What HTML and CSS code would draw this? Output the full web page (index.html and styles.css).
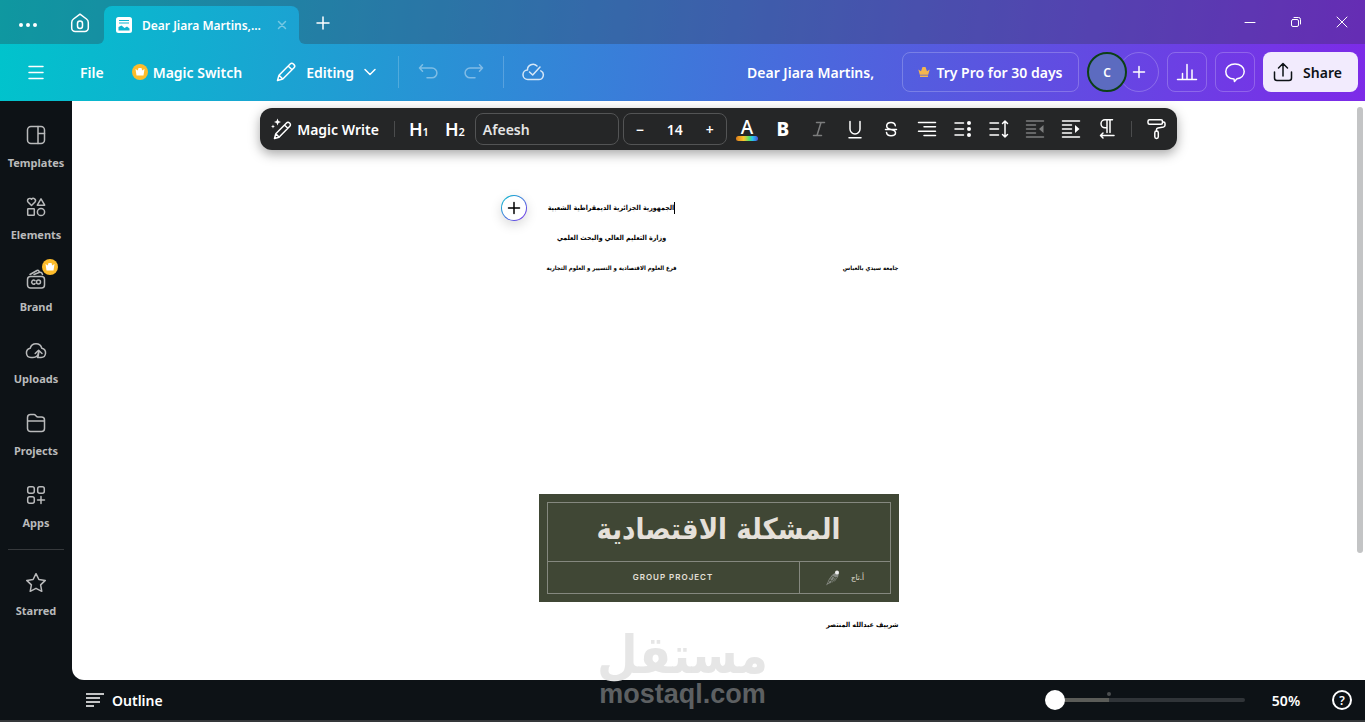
FILE: index.html
```html
<!DOCTYPE html>
<html lang="en">
<head>
  <meta charset="UTF-8" />
  <meta name="viewport" content="width=device-width, initial-scale=1.0"/>
  <title>Dear Jiara Martins,</title>
  <link rel="stylesheet" href="styles.css">
</head>
<body>

  <div class="top">
    <div class="title-bar">
      <button class="win-btn dots" aria-label="More">
        <svg width="20" height="20" viewBox="0 0 20 20" fill="currentColor"><circle cx="3" cy="10" r="2"/><circle cx="10" cy="10" r="2"/><circle cx="17" cy="10" r="2"/></svg>
      </button>
      <button class="win-btn home" aria-label="Home">
        <svg class="icon" width="24" height="24" viewBox="0 0 24 24"><path d="M12 3.2 18.5 8c1.2.9 1.8 2 1.8 3.400V17a3.500 3.500 0 0 1-3.500 3.500H7.200A3.500 3.500 0 0 1 3.700 17v-5.600c0-1.400.6-2.500 1.800-3.400Z"/><rect x="9.500" y="10" width="5" height="7.500" rx="2.500"/></svg>
      </button>
      <div class="tab">
        <svg width="16" height="16" viewBox="0 0 16 16"><rect width="16" height="16" rx="2.500" fill="#fff"/><path d="M3 3.500h10M3 6h10" stroke="#0fb5d0" stroke-width="1.200"/><path d="M2.500 13.500v-3.500l3-1.500 3 2.500 2.500-1.500 2.500 2v2Z" fill="#0fb5d0"/></svg>
        <span class="tab-name">Dear Jiara Martins,...</span>
        <button class="tab-close" aria-label="Close tab"><svg class="icon" width="10" height="10" viewBox="0 0 10 10"><path d="m1.500 1.500 7 7m0-7-7 7"/></svg></button>
      </div>
      <button class="win-btn add-tab" aria-label="New tab"><svg class="icon" width="16" height="16" viewBox="0 0 16 16"><path d="M8 2v12M2 8h12"/></svg></button>
      <div class="win-controls">
        <button class="win-btn" aria-label="Minimize"><svg class="icon thin" width="12" height="12" viewBox="0 0 12 12"><path d="M1 6.500h10"/></svg></button>
        <button class="win-btn" aria-label="Restore"><svg class="icon thin" width="12" height="12" viewBox="0 0 12 12"><rect x="1.500" y="3.500" width="7" height="7" rx="1.500"/><path d="M4 1.500h4.500a2 2 0 0 1 2 2V8"/></svg></button>
        <button class="win-btn" aria-label="Close"><svg class="icon thin" width="12" height="12" viewBox="0 0 12 12"><path d="m1 1 10 10M11 1 1 11"/></svg></button>
      </div>
    </div>

    <div class="header">
      <button class="menu" aria-label="Menu"><svg class="icon" width="24" height="24" viewBox="0 0 24 24"><path d="M5 6.500h14M5 12.500h14M5 18.500h14"/></svg></button>
      <button class="file">File</button>
      <button class="magic-switch">
        <svg width="16" height="16" viewBox="0 0 16 16"><circle cx="8" cy="8" r="8" fill="#fdbc2b"/><path d="m3.500 5 2.300 1.500L6.500 4h3l.7 2.500L12.500 5l-1 6.500h-7Z" fill="#fff"/></svg>
        Magic Switch
      </button>
      <button class="editing">
        <svg class="icon" width="24" height="24" viewBox="0 0 24 24"><path d="m3.500 20.500 1.500-5.300L16.200 4a2.300 2.300 0 0 1 3.200 0l.6.6a2.300 2.300 0 0 1 0 3.200L8.800 19ZM5 15.200 8.800 19M14.200 6 18 9.800"/></svg>
        Editing
        <svg class="icon" width="16" height="16" viewBox="0 0 16 16"><path d="m3 5.500 5 5 5-5"/></svg>
      </button>
      <span class="line"></span>
      <button class="history faded" aria-label="Undo"><svg class="icon" width="24" height="24" viewBox="0 0 24 24"><path d="M6.500 4.800 3.500 8l3 3.200M3.500 8H16a4.900 4.900 0 0 1 0 9.800h-5"/></svg></button>
      <button class="history faded" aria-label="Redo"><svg class="icon" width="24" height="24" viewBox="0 0 24 24"><path d="m17.500 4.800 3 3.200-3 3.200M20.500 8H8a4.900 4.900 0 0 0 0 9.800h5"/></svg></button>
      <span class="line"></span>
      <button class="history saved" aria-label="All changes saved"><svg class="icon" width="24" height="24" viewBox="0 0 24 24"><path d="M16 6a5.500 5.500 0 0 0-9.500 4 4.700 4.700 0 0 0 .5 9.500h10.500a4.600 4.600 0 0 0 2.300-8.700M8.500 12l3.200 3L19 7"/></svg></button>

      <div class="header-right">
        <input class="doc-name" type="text" value="Dear Jiara Martins," aria-label="Design title">
        <button class="outline-btn pro">
          <svg width="12" height="12" viewBox="0 0 12 12"><path d="m.3 3.500 2.700 1.700L4.500 1h3L9 5.200l2.700-1.700-1.500 5.200H1.800ZM2 9.500h8V11H2Z" fill="#f3b64f"/></svg>
          Try Pro for 30 days
        </button>
        <div class="people">
          <button class="avatar">C</button>
          <button class="add-person" aria-label="Add people"><svg class="icon" width="16" height="16" viewBox="0 0 16 16"><path d="M8 2.500v11M2.500 8h11"/></svg></button>
        </div>
        <button class="outline-btn square" aria-label="Insights"><svg class="icon" width="24" height="24" viewBox="0 0 24 24"><path d="M2.500 19.500h19M7.500 19v-5.500M12 19V4.500M17 19v-9"/></svg></button>
        <button class="outline-btn square" aria-label="Comments"><svg class="icon" width="24" height="24" viewBox="0 0 24 24"><path d="M12 4c5.200 0 9.200 3 9.200 7.500 0 4-3.200 6.700-7.200 7.300L11.500 21.500 11 19c-4.800-.3-8.200-3-8.200-7.500C2.800 7 6.800 4 12 4Z"/></svg></button>
        <button class="share">
          <svg class="icon" width="24" height="24" viewBox="0 0 24 24"><path d="M3.500 12v6A2.500 2.500 0 0 0 6 20.500h12a2.500 2.500 0 0 0 2.500-2.500v-6M12 16V3.500M7.500 8 12 3.500 16.500 8"/></svg>
          Share
        </button>
      </div>
    </div>
  </div>

  <div class="main">
    <nav class="sidebar">
      <a href="#"><svg class="icon" width="24" height="24" viewBox="0 0 24 24"><rect x="3.500" y="3.500" width="17" height="17" rx="3.500"/><path d="M14 3.500v17M14 10.500h6.500"/></svg>Templates</a>
      <a href="#"><svg class="icon" width="24" height="24" viewBox="0 0 24 24"><path d="M7.500 10.500 4 7a2 2 0 0 1 3.500-2.700A2 2 0 0 1 11 7ZM17 3.800l3.700 6.400h-7.400Z"/><rect x="3.700" y="13.700" width="6.600" height="6.600" rx=".5"/><circle cx="17" cy="17" r="3.600"/></svg>Elements</a>
      <a href="#">
        <svg class="icon" width="24" height="24" viewBox="0 0 24 24"><rect x="3.500" y="9.500" width="17" height="11.500" rx="3"/><path d="M6 7.500 13 3.500c1-.5 2 0 2 1M10 7.500l5-2c1.500-.6 3 0 3.500 2M11 13.600a2 2 0 1 0 0 3"/><circle cx="14.500" cy="15.100" r="2"/></svg>
        <svg class="crown" width="16" height="16" viewBox="0 0 16 16"><circle cx="8" cy="8" r="8" fill="#fdbc2b"/><path d="m3.500 5 2.300 1.500L6.500 4h3l.7 2.500L12.500 5l-1 6.500h-7Z" fill="#fff"/></svg>
        Brand
      </a>
      <a href="#"><svg class="icon" width="24" height="24" viewBox="0 0 24 24"><path d="M9 18.500H7a4.700 4.700 0 0 1-.8-9.300 6 6 0 0 1 11.600 0 4.700 4.700 0 0 1-.8 9.300h-3.500c1.200-1.500 1.200-3 1.200-6.500M11.200 14.500l3.400-3.300L18 14.500M9 18.500c3 0 5-2 5.500-5"/></svg>Uploads</a>
      <a href="#"><svg class="icon" width="24" height="24" viewBox="0 0 24 24"><path d="M3.500 10V6.500a3 3 0 0 1 3-3H10c1.800 0 2 2.500 4 2.500h3.500a3 3 0 0 1 3 3v8.500a3 3 0 0 1-3 3h-11a3 3 0 0 1-3-3V10h17"/></svg>Projects</a>
      <a href="#"><svg class="icon" width="24" height="24" viewBox="0 0 24 24"><rect x="3.700" y="3.700" width="6.600" height="6.600" rx="2"/><rect x="13.700" y="3.700" width="6.600" height="6.600" rx="2"/><rect x="3.700" y="13.700" width="6.600" height="6.600" rx="2"/><path d="M17 13.500v7M13.500 17h7"/></svg>Apps</a>
      <hr>
      <a href="#"><svg class="icon" width="24" height="24" viewBox="0 0 24 24"><path d="m12 2.700 2.900 5.800 6.400.9-4.700 4.500 1.200 6.400L12 17.300l-5.800 3 1.200-6.400L2.700 9.400l6.400-.9Z"/></svg>Starred</a>
    </nav>

    <div class="workspace">
      <div class="canvas">
        <div class="toolbar">
          <button class="magic-write">
            <svg class="icon" width="24" height="24" viewBox="0 0 24 24"><path d="m5.500 21.500 1.300-4.700L17.500 6a2.100 2.100 0 0 1 3 0l.3.300a2.100 2.100 0 0 1 0 3L10 20.200ZM6.800 16.800l3.400 3.400M15.500 8l3.300 3.300"/><path d="m8.500 1.500 1 2.500 2.500 1-2.500 1-1 2.500-1-2.500L5 5l2.500-1ZM4 7.500l.6 1.400L6 9.500l-1.400.6L4 11.500l-.6-1.400L2 9.500l1.400-.6Z" fill="currentColor" stroke="none"/></svg>
            Magic Write
          </button>
          <span class="divider"></span>
          <button class="tool heading">H<small>1</small></button>
          <button class="tool heading">H<small>2</small></button>
          <button class="font-name">Afeesh</button>
          <div class="font-size">
            <button aria-label="Decrease font size">−</button>
            <input type="text" value="14" aria-label="Font size">
            <button aria-label="Increase font size">+</button>
          </div>
          <button class="tool text-color" aria-label="Text color">A<span class="rainbow"></span></button>
          <button class="tool bold">B</button>
          <button class="tool faded" aria-label="Italic"><svg class="icon" width="24" height="24" viewBox="0 0 24 24"><path d="M9.500 5.500h8M6.500 18.500h8M14 5.500 10 18.500"/></svg></button>
          <button class="tool" aria-label="Underline"><svg class="icon" width="24" height="24" viewBox="0 0 24 24"><path d="M7 4.500V12a5 5 0 0 0 10 0V4.500M6 20.700h12"/></svg></button>
          <button class="tool" aria-label="Strikethrough"><svg class="icon" width="24" height="24" viewBox="0 0 24 24"><path d="M6.500 12.500h11M16.300 8.800c-.2-2-1.800-3.300-4.300-3.300S7.700 7 7.700 9c0 1.800 1.300 2.800 4.300 3.500 3 .7 4.500 1.500 4.500 3.200s-1.800 3-4.500 3-4.300-1.400-4.500-3.300"/></svg></button>
          <button class="tool" aria-label="Alignment"><svg class="icon" width="24" height="24" viewBox="0 0 24 24"><path d="M3.500 5.500h17M9 9.800h11.500M3.500 14.200h17M9 18.500h11.500"/></svg></button>
          <button class="tool" aria-label="List"><svg class="icon" width="24" height="24" viewBox="0 0 24 24"><path d="M4 6h8.500M4 12h8.500M4 18h8.500"/><g fill="currentColor" stroke="none"><circle cx="18" cy="6" r="2"/><circle cx="18" cy="12" r="2"/><circle cx="18" cy="18" r="2"/></g></svg></button>
          <button class="tool" aria-label="Spacing"><svg class="icon" width="24" height="24" viewBox="0 0 24 24"><path d="M3 6h8.500M3 12h8.500M3 18h8.500M18 4.500v15M15.500 6.500 18 4l2.500 2.500M15.500 17.500 18 20l2.500-2.500"/></svg></button>
          <button class="tool faded" aria-label="Outdent"><svg class="icon" width="24" height="24" viewBox="0 0 24 24"><path d="M3.500 4h17M3.500 8h9M3.500 12h9M3.500 16h9M3.500 20h17"/><path d="M20.500 8v8L16 12Z" fill="currentColor" stroke="none"/></svg></button>
          <button class="tool" aria-label="Indent"><svg class="icon" width="24" height="24" viewBox="0 0 24 24"><path d="M3.500 4h17M3.500 8h9M3.500 12h9M3.500 16h9M3.500 20h17"/><path d="M16 8v8l4.500-4Z" fill="currentColor" stroke="none"/></svg></button>
          <button class="tool" aria-label="Text direction"><svg class="icon" width="24" height="24" viewBox="0 0 24 24"><path d="M17.500 2.800H10a4 4 0 0 0 0 8h2M12 2.800v12.700M15 2.800v12.700M19 18.500H5.500M8 16l-2.500 2.500L8 21"/></svg></button>
          <span class="divider"></span>
          <button class="tool" aria-label="Copy style"><svg class="icon" width="24" height="24" viewBox="0 0 24 24"><rect x="4" y="2.700" width="14.500" height="4.500" rx="1.500"/><path d="M18.500 5h1a1.500 1.500 0 0 1 1.500 1.500v1.700c0 1-.6 1.500-1.500 1.700l-5.500 1c-1 .2-1.500.7-1.500 1.600V14"/><rect x="10.800" y="14" width="3.500" height="7.500" rx="1.700"/></svg></button>
        </div>

        <div class="page">
          <button class="add-block" aria-label="Add"><svg class="icon" width="16" height="16" viewBox="0 0 16 16"><path d="M8 2.500v11M2.500 8h11"/></svg></button>
          <div class="page-head" lang="ar">
            <p class="caret">الجمهورية الجزائرية الديمقراطية الشعبية</p>
            <p>وزارة التعليم العالي والبحث العلمي</p>
            <p class="small">فرع العلوم الاقتصادية و التسيير و العلوم التجارية</p>
            <p class="small university">جامعة سيدي بالعباس</p>
          </div>
          <div class="card">
            <div class="card-frame">
              <h1 lang="ar">المشكلة الاقتصادية</h1>
              <div class="card-row">
                <div class="group">GROUP PROJECT</div>
                <div class="teacher">
                  <svg width="16" height="16" viewBox="0 0 16 16"><path d="m1 15.500 3-6.500 3-4 4-3 3 1-1 4-3 4-4 2-2 .5Z" fill="#858982"/><path d="m3 13 4-6m-1 6 4-6m-2 5 4-5M7 6l4 2M4 10l3 1" stroke="#404735" stroke-width=".8"/><circle cx="12" cy="2.500" r="2" fill="#eee"/></svg>
                  <span lang="ar">أ.تاج</span>
                </div>
              </div>
            </div>
          </div>
          <p class="author" lang="ar">شرييف عبدالله المنتصر</p>
        </div>
        <div class="scrollbar"></div>
      </div>

      <div class="footer">
        <button class="outline"><svg width="20" height="16" viewBox="0 0 20 16"><path d="M1 2h18M1 6h14M1 10h14M1 14h8" stroke="currentColor" stroke-width="1.500"/></svg>Outline</button>
        <div class="zoom">
          <input type="range" min="50" max="500" value="50" aria-label="Zoom">
          <span class="zoom-mark"></span>
        </div>
        <button class="percent">50%</button>
        <button class="help" aria-label="Help">?</button>
      </div>
    </div>
  </div>

  <div class="watermark">
    <span lang="ar">مستقل</span>
    <span class="site">mostaql.com</span>
  </div>

</body>
</html>
```
FILE: styles.css
```css
* {
  box-sizing: border-box;
}

body {
  margin: 0;
  height: 100vh;
  display: flex;
  flex-direction: column;
  overflow: hidden;
  font-family: "Noto Sans", "Open Sans", sans-serif;
  font-size: 14px;
  font-weight: 600;
  color: #fff;
  background: #0d1216;
  border-bottom: 2px solid #35383a;
}

button,
input {
  font: inherit;
  color: inherit;
  background: none;
  border: none;
  padding: 0;
  margin: 0;
}

button {
  display: flex;
  align-items: center;
  justify-content: center;
  flex-shrink: 0;
  white-space: nowrap;
  cursor: pointer;
}

p,
h1 {
  margin: 0;
}

svg {
  display: block;
  flex-shrink: 0;
}

.icon {
  fill: none;
  stroke: currentColor;
  stroke-width: 1.5;
  stroke-linecap: round;
  stroke-linejoin: round;
}

.thin {
  stroke-width: 1;
}

.faded {
  opacity: 0.4;
}

/* Top */
.top {
  background: linear-gradient(98deg, #00c4cc, #7d2ae8);
}

.title-bar {
  height: 44px;
  display: flex;
  align-items: stretch;
  overflow: hidden;
}

.win-btn {
  background: rgba(50, 50, 60, 0.3);
  width: 46px;
}

.dots {
  width: 56px;
  padding-top: 6px;
}

.home {
  width: 48px;
  padding-top: 2px;
  border-bottom-right-radius: 6px;
}

.tab {
  width: 195px;
  display: flex;
  align-items: center;
  padding: 6px 12px 0;
  position: relative;
  overflow: hidden;
}

/* shades everything outside the rounded tab */
.tab::before {
  content: "";
  position: absolute;
  inset: 6px 0 -20px;
  border-radius: 8px;
  box-shadow: 0 0 0 10px rgba(50, 50, 60, 0.3);
  pointer-events: none;
}

.tab-name {
  margin-left: 10px;
  font-size: 12px;
  white-space: nowrap;
}

.tab-close {
  margin-left: auto;
  opacity: 0.4;
}

.add-tab {
  width: 48px;
  padding-top: 2px;
  border-bottom-left-radius: 6px;
}

.win-controls {
  flex: 1;
  display: flex;
  justify-content: flex-end;
  background: rgba(50, 50, 60, 0.3);
}

.win-controls .win-btn {
  background: none;
}

.header {
  height: 57px;
  display: flex;
  align-items: center;
  padding: 0 7px 1px 24px;
}

.file {
  margin-left: 32px;
}

.magic-switch {
  margin-left: 28px;
  gap: 5px;
}

.editing {
  margin: 0 3px 0 32px;
  gap: 8px;
}

.line {
  width: 1px;
  height: 32px;
  margin: 0 17px;
  background: rgba(255, 255, 255, 0.2);
}

.history + .history {
  margin-left: 22px;
}

.saved {
  opacity: 0.8;
}

.header-right {
  display: flex;
  align-items: center;
  gap: 8px;
  margin-left: auto;
}

.doc-name {
  width: 132px;
  margin-right: 15px;
}

.outline-btn {
  height: 40px;
  border: 1px solid rgba(255, 255, 255, 0.22);
  border-radius: 8px;
}

.pro {
  width: 177px;
  gap: 6px;
}

.square {
  width: 40px;
}

.people {
  display: flex;
}

.avatar {
  width: 40px;
  height: 40px;
  border: 2px solid #0c4016;
  border-radius: 50%;
  background: #5c6bc0;
  font-size: 12px;
  z-index: 1;
}

.add-person {
  width: 40px;
  height: 40px;
  margin-left: -8px;
  border: 1px solid rgba(255, 255, 255, 0.22);
  border-radius: 50%;
}

.share {
  width: 95px;
  height: 40px;
  gap: 8px;
  padding-right: 8px;
  border-radius: 8px;
  background: #f2ebfd;
  color: #0d1216;
}

/* Sidebar */
.main {
  flex: 1;
  display: flex;
  min-height: 0;
}

.sidebar {
  width: 72px;
  flex-shrink: 0;
  padding-top: 8px;
}

.sidebar a {
  height: 72px;
  display: flex;
  flex-direction: column;
  align-items: center;
  gap: 8px;
  padding-top: 14px;
  position: relative;
  color: #b9babb;
  font-size: 11px;
  font-weight: 700;
  line-height: 16px;
  text-decoration: none;
}

.crown {
  position: absolute;
  top: 6px;
  left: 42px;
}

.sidebar hr {
  margin: 8px 8px 7px;
  border: none;
  border-top: 1px solid #36393c;
}

/* Canvas */
.workspace {
  flex: 1;
  min-width: 0;
  display: flex;
  flex-direction: column;
}

.canvas {
  flex: 1;
  min-height: 0;
  position: relative;
  padding-top: 7px;
  background: #fff;
  border-bottom-left-radius: 12px;
  overflow: hidden;
}

.scrollbar {
  position: absolute;
  top: 6px;
  right: 2px;
  width: 6px;
  height: 77%;
  border-radius: 3px;
  background: #c3c4c5;
}

.toolbar {
  width: fit-content;
  height: 42px;
  margin: 0 auto;
  padding: 0 3px 0 9px;
  display: flex;
  align-items: center;
  background: #252627;
  border-radius: 12px;
  box-shadow: 0 4px 12px rgba(0, 0, 0, 0.35);
}

.magic-write {
  gap: 4px;
  padding-right: 9px;
}

.divider {
  width: 1px;
  height: 16px;
  margin: 0 6px;
  background: #4b4c4d;
}

.tool {
  width: 36px;
  height: 36px;
}

.heading {
  font-size: 18px;
}

.heading small {
  font-size: 11px;
  padding-top: 5px;
}

.font-name {
  width: 144px;
  height: 32px;
  margin: 0 4px 0 2px;
  padding: 0 7px;
  justify-content: flex-start;
  border: 1px solid #535455;
  border-radius: 8px;
  color: #e4e4e4;
}

.font-size {
  width: 104px;
  height: 32px;
  margin-right: 2px;
  display: flex;
  border: 1px solid #535455;
  border-radius: 8px;
}

.font-size button {
  width: 32px;
}

.font-size input {
  flex: 1;
  min-width: 0;
  text-align: center;
}

.text-color {
  flex-direction: column;
  font-size: 19px;
  font-weight: 500;
  line-height: 18px;
}

.rainbow {
  width: 22px;
  height: 5px;
  border-radius: 3px;
  background: linear-gradient(90deg, #d97a1c, #fcc52b 35%, #55e06a 60%, #28c3ee 75%, #4a52dd);
}

.bold {
  font-size: 19px;
  font-weight: 800;
}

.page {
  width: 360px;
  margin: 43px auto 0;
  position: relative;
  color: #000;
  font-family: "DejaVu Sans Condensed", "DejaVu Sans", sans-serif;
  font-weight: 700;
}

.add-block {
  position: absolute;
  left: -38px;
  top: 2px;
  width: 26px;
  height: 26px;
  border: 1px solid transparent;
  border-radius: 50%;
  background: linear-gradient(#fff, #fff) padding-box, linear-gradient(135deg, #00c4cc, #7d2ae8) border-box;
  box-shadow: 0 4px 12px rgba(0, 0, 0, 0.15);
}

.page-head {
  display: grid;
  grid-template-columns: 146px auto;
  grid-auto-rows: 30px;
  font-size: 7px;
  line-height: 30px;
  text-align: center;
  white-space: nowrap;
}

.page-head p {
  grid-column: 1;
}

.page-head .small {
  font-size: 6px;
}

.page-head .university {
  grid-column: 2;
  grid-row: 3;
  text-align: right;
}

.caret::after {
  content: "";
  display: inline-block;
  width: 1px;
  height: 12px;
  vertical-align: middle;
  background: #000;
}

.card {
  margin-top: 211px;
  padding: 8px;
  background: #404735;
  color: #e5e0da;
}

.card-frame {
  border: 1px solid #85887f;
}

.card h1 {
  height: 58px;
  font-size: 29px;
  line-height: 52px;
  text-align: center;
  white-space: nowrap;
}

.card-row {
  display: flex;
  height: 32px;
  border-top: 1px solid #85887f;
  font-size: 8px;
  line-height: 31px;
}

.group {
  flex: 1;
  text-align: center;
  font-family: Inter, sans-serif;
  font-weight: 600;
  letter-spacing: 1px;
}

.teacher {
  width: 91px;
  display: flex;
  align-items: center;
  justify-content: center;
  gap: 10px;
  border-left: 1px solid #85887f;
  font-weight: 400;
}

.author {
  font-size: 7px;
  line-height: 16px;
  margin-top: 15px;
  text-align: right;
}

/* Footer */
.footer {
  height: 40px;
  display: flex;
  align-items: center;
  padding: 0 13px;
}

.outline {
  gap: 7px;
  margin-right: auto;
}

.zoom {
  position: relative;
  width: 200px;
  margin-right: 25px;
}

.zoom input {
  display: block;
  width: 100%;
  height: 20px;
  appearance: none;
}

.zoom input::-webkit-slider-runnable-track {
  height: 4px;
  border-radius: 2px;
  background: linear-gradient(90deg, #5b5c58 32%, #303438 32%);
}

.zoom input::-webkit-slider-thumb {
  appearance: none;
  width: 20px;
  height: 20px;
  margin-top: -8px;
  border-radius: 50%;
  background: #fff;
}

.zoom-mark {
  position: absolute;
  left: 62px;
  top: 2px;
  width: 4px;
  height: 4px;
  border-radius: 50%;
  background: #4b4e50;
}

.percent {
  width: 32px;
  margin-right: 30px;
}

.help {
  width: 20px;
  height: 20px;
  border: 2px solid #fff;
  border-radius: 50%;
  font-size: 12px;
}

/* Watermark */
.watermark {
  position: absolute;
  left: 50%;
  bottom: 14px;
  transform: translateX(-50%);
  display: flex;
  flex-direction: column;
  align-items: center;
  color: #e6e6e6;
  font-family: "DejaVu Sans Condensed", "DejaVu Sans", sans-serif;
  font-size: 52px;
  font-weight: 700;
  line-height: 52px;
  pointer-events: none;
}

.watermark .site {
  color: #5d6062;
  font-family: "Liberation Sans", sans-serif;
  font-size: 27px;
  line-height: 27px;
}
```
